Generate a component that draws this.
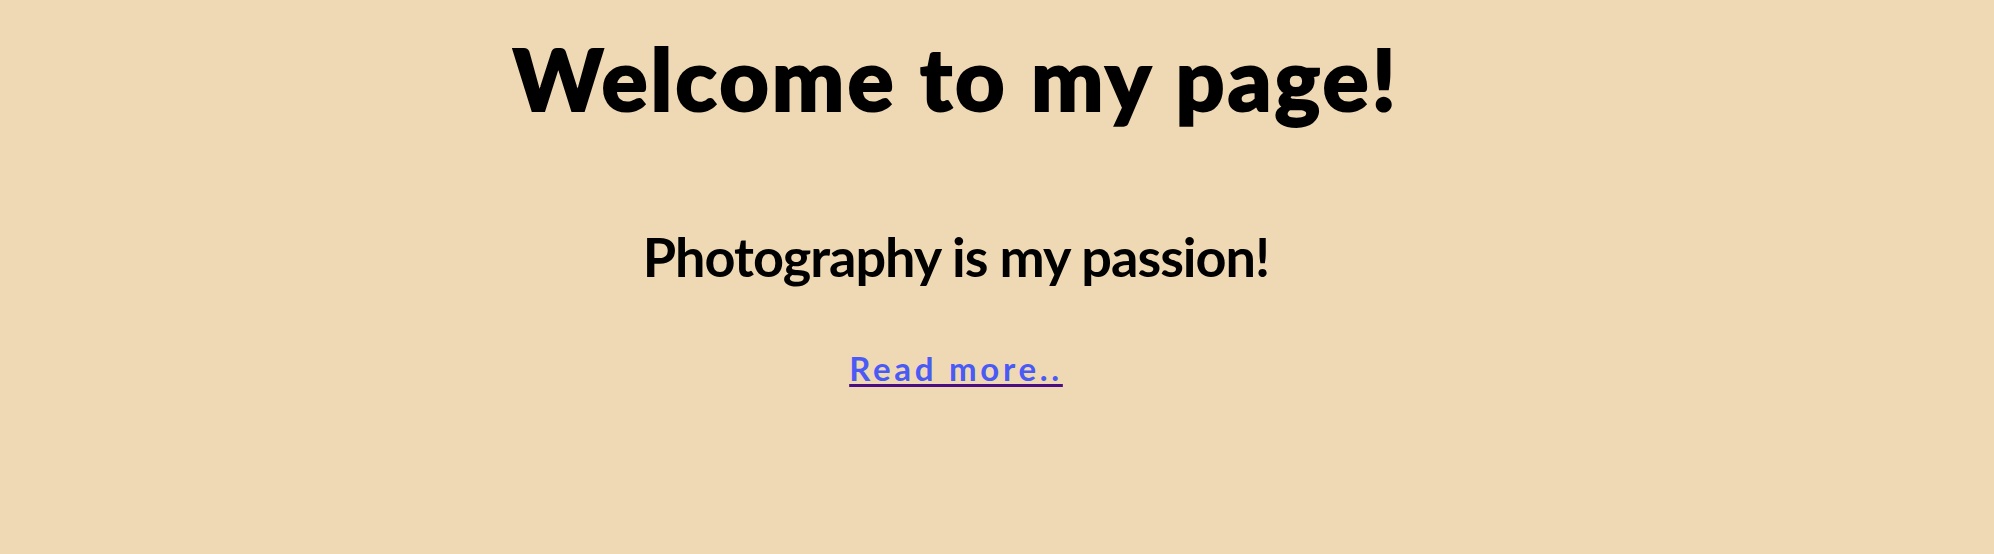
import React from 'react';

const App = () => {
  return (
    <div className="min-h-[554px] w-full bg-[#efd9b4] pr-[82px] text-center font-['Lato','Liberation_Sans',sans-serif]">
      <h1 className="pt-[35px] text-[86px] leading-none font-black tracking-[3px] text-black [-webkit-text-stroke:2px_black]">
        Welcome to my page!
      </h1>

      <h2 className="mt-[109px] text-[54px] leading-none font-bold tracking-[-1px] text-black">
        Photography is my passion!
      </h2>

      <div className="mt-[68px] text-[33px] leading-none">
        <a
          href="#more"
          className="font-bold tracking-[3.7px] text-[#4a5af5] underline decoration-[#4b0e82] decoration-[3px] underline-offset-[3px]"
        >
          Read more..
        </a>
      </div>
    </div>
  );
};

export default App;
